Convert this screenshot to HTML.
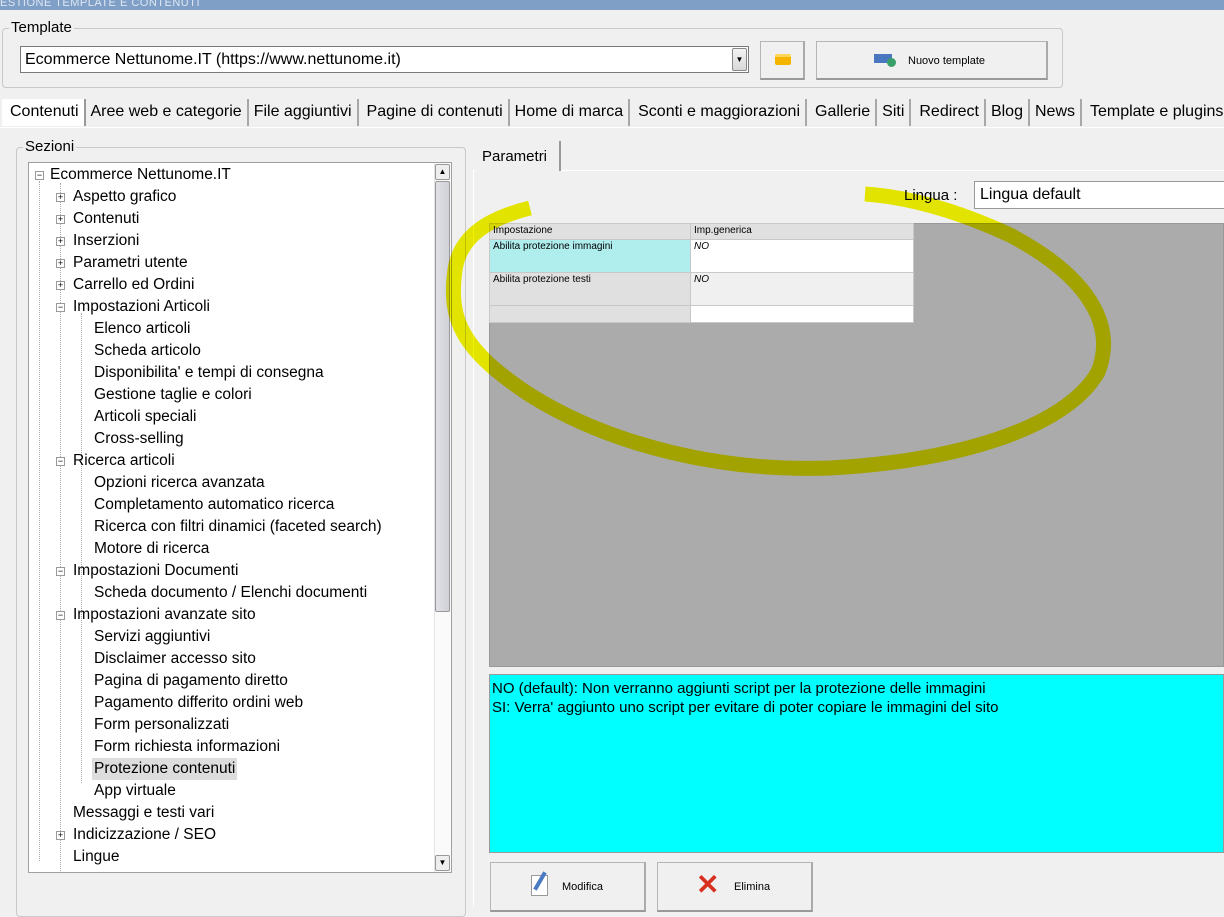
<!DOCTYPE html>
<html><head><meta charset="utf-8"><style>
*{box-sizing:border-box;margin:0;padding:0}
body{width:1224px;height:907px;overflow:hidden;background:#f0f0f0;font-family:"Liberation Sans",sans-serif;color:#000;position:relative}
.a{position:absolute}
.title{left:0;top:0;width:1224px;height:10px;background:#7f9fc6;color:#dfe8f3;font-size:11px;line-height:6px;overflow:hidden;letter-spacing:.5px}
.grp{border:1px solid #c8c8c8;border-radius:4px}
.lbl{background:#f0f0f0;font-size:15px;padding:0 2px}
.btn{border:1px solid #b5b5b5;border-bottom:2px solid #999;border-right:2px solid #aaa;background:#f0f0f0;font-size:11px}
.tabs{top:99px;left:2px;height:29px;font-size:16px;white-space:nowrap}
.tabs span{display:inline-block;padding:4px 5px 5px 5px;border-right:2px solid #a8a8a8}
.tree{left:28px;top:162px;width:424px;height:711px;background:#fff;border:1px solid #a0a0a0;overflow:hidden}
.it{position:absolute;font-size:15.5px;height:22px;line-height:22px;white-space:nowrap}
.bx{position:absolute;width:9px;height:9px;border:1px solid #999;background:#fff;font-size:9px;line-height:7px;text-align:center;color:#000}
td{font-size:10px;vertical-align:top;padding:1px 3px;border:1px solid #c8c8c8}
</style></head><body>
<div class="a title">ESTIONE TEMPLATE E CONTENUTI</div>
<div class="a grp" style="left:2px;top:28px;width:1061px;height:60px"></div>
<div class="a lbl" style="left:9px;top:19px">Template</div>
<div class="a" style="left:20px;top:46px;width:729px;height:27px;background:#fff;border:1px solid #7a7a7a;font-size:16px;line-height:25px;padding-left:4px">Ecommerce Nettunome.IT (https://www.nettunome.it)</div>
<div class="a" style="left:732px;top:48px;width:15px;height:23px;border:1px solid #888;border-radius:2px;background:linear-gradient(#f4f4f4,#d8d8d8);font-size:8px;text-align:center;line-height:22px">▼</div>
<div class="a btn" style="left:760px;top:41px;width:45px;height:39px"><div class="a" style="left:14px;top:12px;width:16px;height:11px;background:#f5b400;border-radius:2px;border-top:3px solid #ffd65a"></div></div>
<div class="a btn" style="left:816px;top:41px;width:232px;height:39px"><div class="a" style="left:57px;top:12px;width:18px;height:9px;background:#4a78c0"></div><div class="a" style="left:70px;top:16px;width:9px;height:9px;border-radius:50%;background:#3aa06a"></div><div class="a" style="left:91px;top:13px">Nuovo template</div></div>
<div class="a tabs"><span style="background:#fff;padding-left:8px;border-right:2px solid #999">Contenuti</span><span>Aree web e categorie</span><span>File aggiuntivi</span><span style="padding-left:8px">Pagine di contenuti</span><span>Home di marca</span><span style="padding-left:8px">Sconti e maggiorazioni</span><span style="padding-left:8px">Gallerie</span><span>Siti</span><span style="padding-left:8px">Redirect</span><span>Blog</span><span>News</span><span style="padding-left:8px;border:none">Template e plugins</span></div>
<div class="a" style="left:0;top:127px;width:1224px;height:1px;background:#fff"></div>
<div class="a grp" style="left:16px;top:147px;width:450px;height:770px"></div>
<div class="a lbl" style="left:23px;top:138px">Sezioni</div>
<div class="a tree">
<div class="it" style="left:21px;top:1px">Ecommerce Nettunome.IT</div><div class="bx" style="left:6px;top:8px">−</div>
<div class="a" style="left:10px;top:18px;width:0;height:680px;border-left:1px dotted #aaa"></div>
<div class="a" style="left:52px;top:150px;width:0;height:470px;border-left:1px dotted #aaa"></div>
<div class="a" style="left:31px;top:20px;width:0;height:690px;border-left:1px dotted #aaa"></div>
</div>
<div class="a" style="left:434px;top:163px;width:17px;height:709px;background:#fafafa;border-left:1px solid #e4e4e4"></div>
<div class="a" style="left:435px;top:164px;width:15px;height:16px;border:1px solid #999;border-radius:2px;background:#eee;font-size:8px;text-align:center;line-height:14px">▲</div>
<div class="a" style="left:435px;top:181px;width:15px;height:431px;border:1px solid #999;border-radius:2px;background:linear-gradient(90deg,#e0e0e6,#d0d0d8)"></div>
<div class="a" style="left:435px;top:855px;width:15px;height:16px;border:1px solid #999;border-radius:2px;background:#eee;font-size:8px;text-align:center;line-height:14px">▼</div>
<div id="items"></div>
<div class="a" style="left:474px;top:170px;width:750px;height:1px;background:#fff"></div>
<div class="a" style="left:476px;top:141px;width:85px;height:30px;border-right:2px solid #999;font-size:15px;padding:7px 6px;background:#f0f0f0">Parametri</div>
<div class="a" style="left:473px;top:170px;width:1px;height:737px;background:#fff"></div>
<div class="a" style="left:904px;top:187px;font-size:15px">Lingua :</div>
<div class="a" style="left:974px;top:181px;width:260px;height:28px;background:#fff;border:1px solid #999;font-size:16px;padding:4px 5px">Lingua default</div>
<div class="a" style="left:489px;top:223px;width:735px;height:444px;background:#ababab;border:1px solid #999"></div>
<table class="a" style="left:489px;top:223px;width:425px;border-collapse:collapse;background:#fff">
<tr style="height:16px;background:#e0e0e0"><td style="width:201px">Impostazione</td><td>Imp.generica</td></tr>
<tr style="height:33px"><td style="background:#b0eeee">Abilita protezione immagini</td><td style="font-style:italic">NO</td></tr>
<tr style="height:33px;background:#f0f0f0"><td style="background:#e0e0e0">Abilita protezione testi</td><td style="font-style:italic">NO</td></tr>
<tr style="height:17px"><td style="background:#e0e0e0"></td><td></td></tr>
</table>
<div class="a" style="left:489px;top:674px;width:735px;height:179px;background:#00ffff;border:1px solid #999;font-size:15px;padding:4px 2px;line-height:19px">NO (default): Non verranno aggiunti script per la protezione delle immagini<br>SI: Verra' aggiunto uno script per evitare di poter copiare le immagini del sito</div>
<div class="a btn" style="left:490px;top:862px;width:156px;height:50px"><div class="a" style="left:40px;top:12px;width:17px;height:21px;background:#fff;border:1px solid #999"></div><div class="a" style="left:47px;top:8px;width:4px;height:20px;background:#4a7ac0;transform:rotate(30deg)"></div><div class="a" style="left:71px;top:18px">Modifica</div></div>
<div class="a btn" style="left:657px;top:862px;width:156px;height:50px"><div class="a" style="left:38px;top:8px;font-size:28px;color:#d83020;font-weight:bold;line-height:28px">✕</div><div class="a" style="left:76px;top:18px">Elimina</div></div>
<svg class="a" style="left:0;top:0;mix-blend-mode:multiply" width="1224" height="907"><path d="M530,208 C490,218 460,235 455,270 C448,320 462,350 530,395 C610,445 720,472 830,468 C950,462 1065,430 1098,372 C1115,330 1095,280 1010,235 C960,212 910,197 865,194" fill="none" stroke="#f2f200" stroke-width="15"/></svg>
<script>
var L=[[0,"Aspetto grafico",1],[0,"Contenuti",1],[0,"Inserzioni",1],[0,"Parametri utente",1],[0,"Carrello ed Ordini",1],[0,"Impostazioni Articoli",2],[1,"Elenco articoli"],[1,"Scheda articolo"],[1,"Disponibilita' e tempi di consegna"],[1,"Gestione taglie e colori"],[1,"Articoli speciali"],[1,"Cross-selling"],[0,"Ricerca articoli",2],[1,"Opzioni ricerca avanzata"],[1,"Completamento automatico ricerca"],[1,"Ricerca con filtri dinamici (faceted search)"],[1,"Motore di ricerca"],[0,"Impostazioni Documenti",2],[1,"Scheda documento / Elenchi documenti"],[0,"Impostazioni avanzate sito",2],[1,"Servizi aggiuntivi"],[1,"Disclaimer accesso sito"],[1,"Pagina di pagamento diretto"],[1,"Pagamento differito ordini web"],[1,"Form personalizzati"],[1,"Form richiesta informazioni"],[1,"Protezione contenuti"],[1,"App virtuale"],[0,"Messaggi e testi vari"],[0,"Indicizzazione / SEO",1],[0,"Lingue"]];
var h="";L.forEach(function(e,i){var y=186+i*22,x=e[0]?94:73;h+='<div class="it" style="left:'+x+'px;top:'+y+'px;'+(e[1]=="Protezione contenuti"?'background:#ddd;padding:0 2px;margin-left:-2px':'')+'">'+e[1]+'</div>';if(e[2])h+='<div class="bx" style="left:56px;top:'+(y+7)+'px">'+(e[2]==1?'+':'−')+'</div>';});
document.getElementById("items").innerHTML=h;
</script>
</body></html>
